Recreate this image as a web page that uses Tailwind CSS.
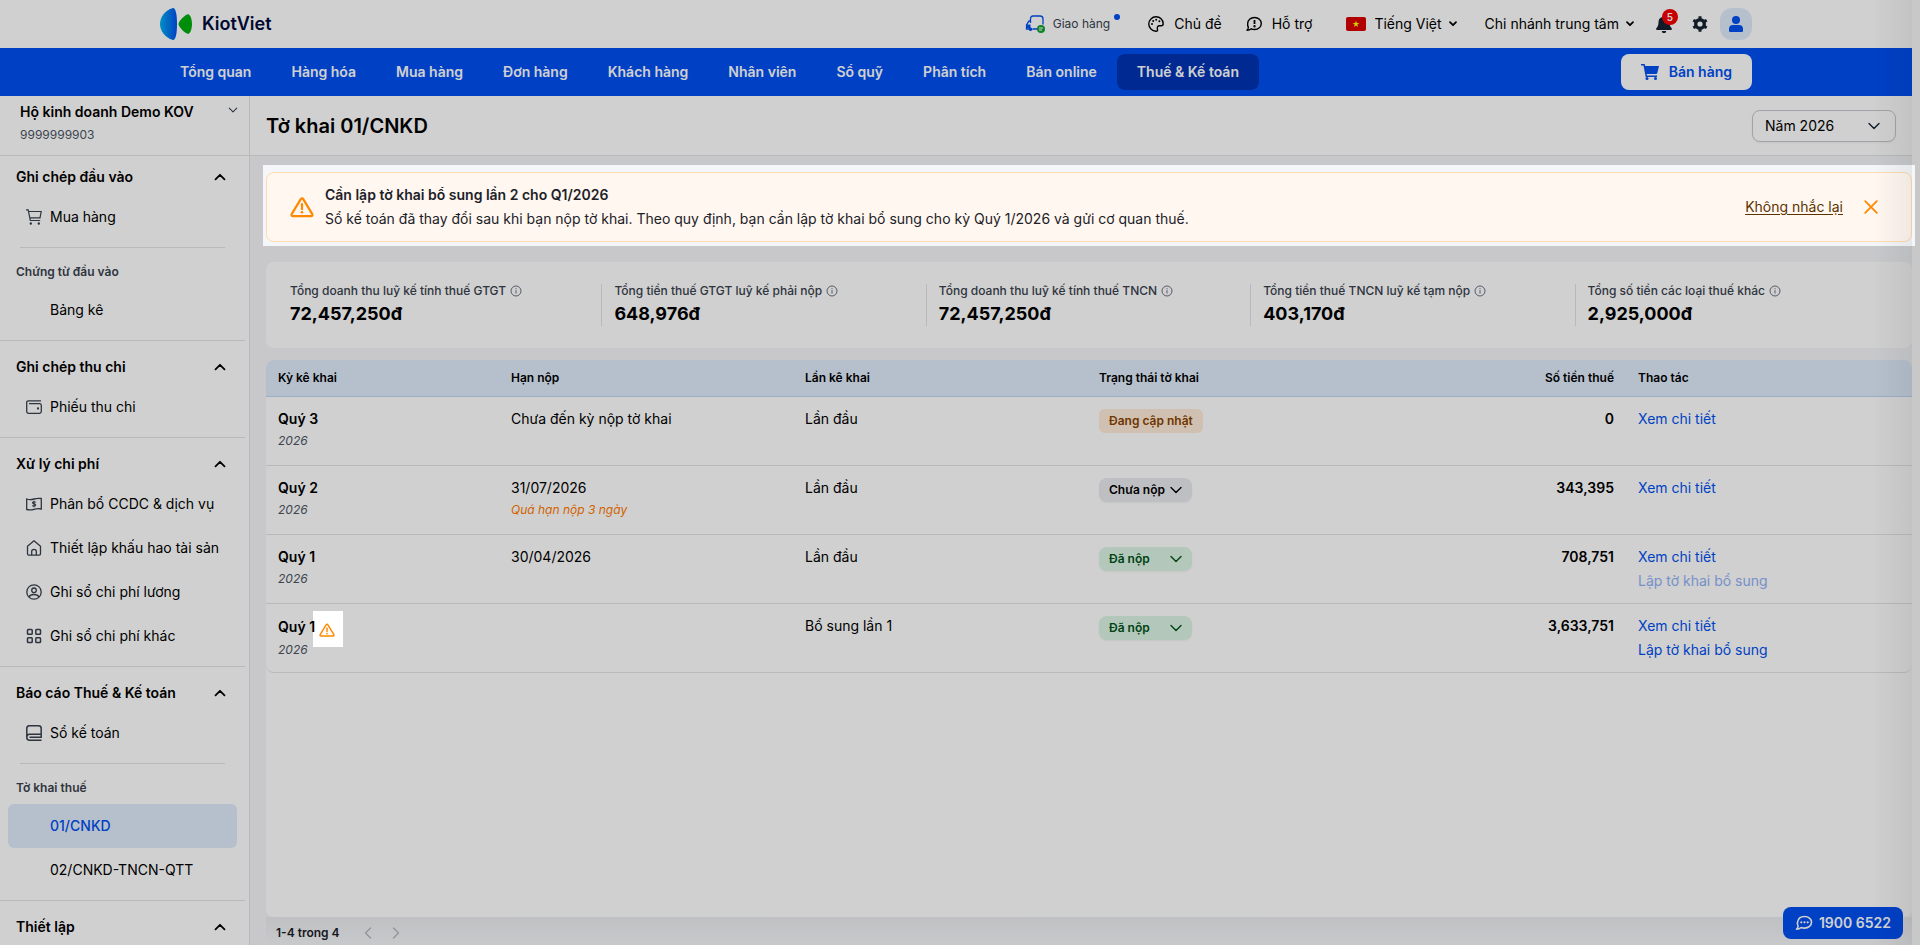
<!DOCTYPE html>
<html lang="vi">
<head>
    <meta charset="UTF-8">
    <meta name="viewport" content="width=device-width, initial-scale=1.0">
    <title>Tờ khai 01/CNKD - KiotViet</title>
    <script src="https://cdn.jsdelivr.net/npm/@tailwindcss/browser@4"></script>
</head>
<body class="relative h-screen overflow-hidden bg-[#f6f6f6] pr-2 font-['Inter',sans-serif] text-sm text-black">

    <!-- Shared icons -->
    <svg class="hidden">
        <symbol id="chevron" viewBox="0 0 16 16"><path d="M3 5.5l5 5 5-5" fill="none" stroke="currentColor" stroke-width="1.4" stroke-linecap="round" stroke-linejoin="round"/></symbol>
        <symbol id="chevron-bold" viewBox="0 0 16 16"><path d="M5 6.200L8 9.200l3-3" fill="none" stroke="currentColor" stroke-width="1.800" stroke-linecap="round" stroke-linejoin="round"/></symbol>
        <symbol id="chevron-up" viewBox="0 0 16 16"><path d="M3.500 10.300L8 5.800l4.500 4.500" fill="none" stroke="currentColor" stroke-width="1.8" stroke-linecap="round" stroke-linejoin="round"/></symbol>
        <symbol id="info" viewBox="0 0 12 12"><g fill="none" stroke="currentColor"><circle cx="6" cy="6" r="5"/><path d="M6 5.2v3.3M6 3.2v1.1"/></g></symbol>
        <symbol id="warning" viewBox="0 0 24 24"><path d="M12 3.300c.5 0 .9.3 1.100.6l9.200 15.200c.5.900-.1 2-1.100 2H2.800c-1 0-1.600-1.100-1.100-2l9.200-15.200c.2-.3.6-.6 1.100-.6z" fill="none" stroke="currentColor" stroke-width="2.200" stroke-linejoin="round"/><path d="M12 9.2v5" stroke="currentColor" stroke-width="2.200" stroke-linecap="round"/><circle cx="12" cy="17.3" r="1.3" fill="currentColor"/></symbol>
    </svg>

    <div class="relative flex h-full flex-col bg-white">
        <header class="px-40">
            <div class="mx-auto flex h-12 max-w-[1592px] items-center justify-between">
                <a href="#" class="flex items-center gap-2.5 text-lg font-semibold text-[#000a3d]">
                    <svg class="h-8 w-8" viewBox="0 0 32 32">
                        <defs><linearGradient id="logo"><stop offset="0" stop-color="#00b0f0"/><stop offset="1" stop-color="#0050f0"/></linearGradient></defs>
                        <path d="M13 0C5 2.500 0 9 0 16s5 13.500 13 16c2.800 0 4-7 4-16S15.800 0 13 0z" fill="url(#logo)"/>
                        <path d="M27.500 6.200c-4 1.800-8.700 7-9 9.800.3 2.800 5 8 9 9.800 2.500.5 4.500-4 4.500-9.800s-2-10.300-4.500-9.800z" fill="#00ad0c"/>
                    </svg>
                    KiotViet
                </a>
                <div class="flex items-center">
                    <a href="#" class="flex items-center text-xs text-[#39424e]">
                        <svg class="mr-2 h-5 w-5" viewBox="0 0 20 20" fill="none">
                            <path d="M5.500 9V5c0-2 1-3 2.500-3h7c2 0 3 1 3 3v5.500M5.500 7H4L1.500 11v4H4M7.500 15H12" stroke="#0050f0" stroke-width="1.300"/>
                            <path d="M1.500 10.500h4V14h-4z" fill="#0050f0"/><circle cx="5.500" cy="15.200" r="1.800" fill="#0050f0"/>
                            <circle cx="16" cy="15" r="4" fill="#12a130"/><path d="M14 14h4M14 16h3" stroke="#fff"/>
                        </svg>
                        Giao hàng
                        <span class="mb-[14px] ml-1 h-1.5 w-1.5 rounded-full bg-[#0050f0]"></span>
                    </a>
                    <a href="#" class="ml-7 flex items-center gap-2.5">
                        <svg class="h-4 w-4" viewBox="0 0 16 16" fill="none" stroke="currentColor" stroke-width="1.400">
                            <path d="M8 .8a7.200 7.200 0 1 0 0 14.400c1.500 0 1.800-1 1.400-2.200-.5-1.700.3-3.200 2-3.200h1.800c1.300 0 2-.8 2-2C15.200 3.800 12 .8 8 .8z"/>
                            <g fill="currentColor" stroke="none"><circle cx="4" cy="8" r="1"/><circle cx="5.200" cy="5" r="1"/><circle cx="8.200" cy="3.700" r="1"/><circle cx="11.400" cy="5.200" r="1"/></g>
                        </svg>
                        Chủ đề
                    </a>
                    <a href="#" class="ml-6 flex items-center gap-2.5">
                        <svg class="h-4 w-4" viewBox="0 0 16 16" fill="none" stroke="currentColor" stroke-width="1.400">
                            <path d="M8.500 1.500c4 0 6.800 2.700 6.800 6s-2.800 6-6.800 6c-1.200 0-2.300-.2-3.200-.7-.9.9-2.400 1.500-4.300 1.500.8-.8 1.300-1.800 1.400-3A5.600 5.600 0 0 1 1.700 7.500c0-3.300 2.800-6 6.800-6z" stroke-linejoin="round"/><path d="M8.500 4v4" stroke-width="1.800"/><circle cx="8.500" cy="10.300" r=".5"/>
                        </svg>
                        Hỗ trợ
                    </a>
                    <button type="button" class="ml-[34px] flex items-center">
                        <svg class="mr-2 h-3.5 w-5" viewBox="0 0 20 14"><rect width="20" height="14" rx="2" fill="#da0000"/><path d="M10 3.500l.8 2.500h2.600l-2.100 1.500.8 2.500L10 8.500 7.900 10l.8-2.500L6.600 6h2.600z" fill="#ff0"/></svg>
                        Tiếng Việt
                        <svg class="ml-[3px] h-4 w-4"><use href="#chevron-bold"/></svg>
                    </button>
                    <button type="button" class="ml-6 flex items-center">
                        Chi nhánh trung tâm
                        <svg class="ml-[3px] h-4 w-4"><use href="#chevron-bold"/></svg>
                    </button>
                    <button type="button" aria-label="Thông báo" class="relative ml-[18px]">
                        <svg class="h-[18px] w-4 text-[#152030]" viewBox="0 0 16 18" fill="currentColor"><path d="M8 0a1 1 0 0 0-1 1v.7A5.500 5.500 0 0 0 2.500 7c0 3.500-.8 4.700-2 6-.8.900-.2 2 .9 2h13.200c1.100 0 1.700-1.100.9-2-1.200-1.300-2-2.500-2-6A5.500 5.500 0 0 0 9 1.700V1a1 1 0 0 0-1-1zM5.800 16a2.200 2.200 0 0 0 4.400 0z"/></svg>
                        <span class="absolute -top-1.5 -right-1.5 flex h-4 w-4 items-center justify-center rounded-full bg-[#f40000] text-[10px] font-semibold text-white">5</span>
                    </button>
                    <button type="button" aria-label="Cài đặt" class="ml-5">
                        <svg class="h-4 w-4 text-[#152030]" viewBox="0 0 16 16" fill="none" stroke="currentColor"><circle cx="8" cy="8" r="4.300" stroke-width="3.400"/><path d="M8 .3v2.500M8 13.200v2.500M1.300 4.200l2.200 1.200M12.500 10.600l2.200 1.200M1.300 11.800l2.200-1.200M12.500 5.400l2.200-1.200" stroke-width="3"/></svg>
                    </button>
                    <button type="button" aria-label="Tài khoản" class="ml-3 flex h-8 w-8 items-center justify-center rounded-xl bg-[#dfecfb] text-[#0050f0]">
                        <svg class="h-4 w-4" viewBox="0 0 16 16" fill="currentColor"><circle cx="8" cy="4" r="4"/><path d="M1 13a4 4 0 0 1 4-4h6a4 4 0 0 1 4 4v1.500c0 1-.5 1.500-1.500 1.500h-11C1.500 16 1 15.500 1 14.500z"/></svg>
                    </button>
                </div>
            </div>
        </header>

        <nav class="bg-[#004ff2] px-40">
            <div class="mx-auto flex h-12 max-w-[1592px] items-center justify-between">
                <div class="flex font-semibold text-white">
                    <a href="#" class="flex h-9 items-center px-5">Tổng quan</a>
                    <a href="#" class="flex h-9 items-center px-5">Hàng hóa</a>
                    <a href="#" class="flex h-9 items-center px-5">Mua hàng</a>
                    <a href="#" class="flex h-9 items-center px-5">Đơn hàng</a>
                    <a href="#" class="flex h-9 items-center px-5">Khách hàng</a>
                    <a href="#" class="flex h-9 items-center px-5">Nhân viên</a>
                    <a href="#" class="flex h-9 items-center px-5">Sổ quỹ</a>
                    <a href="#" class="flex h-9 items-center px-5">Phân tích</a>
                    <a href="#" class="flex h-9 items-center px-5">Bán online</a>
                    <a href="#" class="flex h-9 items-center rounded-lg bg-[#0033b3] px-5">Thuế &amp; Kế toán</a>
                </div>
                <button type="button" class="flex h-9 items-center gap-2.5 rounded-lg bg-white px-5 font-semibold text-[#0050f0]">
                    <svg class="h-4 w-[18px]" viewBox="0 0 18 16" fill="currentColor"><path d="M0 0h3.200c.4 0 .7.300.8.700L4.200 2H18l-1.800 7.200c-.1.500-.5.800-1 .8H5.600l.3 1.500H16V13H4.700L2.500 1.500H0z"/><circle cx="6" cy="14.500" r="1.500"/><circle cx="14.500" cy="14.500" r="1.500"/></svg>
                    Bán hàng
                </button>
            </div>
        </nav>

        <div class="flex min-h-0 flex-1">
            <aside class="flex w-[250px] shrink-0 flex-col border-r border-[#e2e3e6]">
                <button type="button" class="flex h-[60px] shrink-0 items-start justify-between border-b border-[#e2e3e6] pt-1.5 pr-2 pl-5 text-left">
                    <span>
                        <span class="block font-semibold leading-5">Hộ kinh doanh Demo KOV</span>
                        <span class="mt-[3px] block text-xs leading-5 text-[#4b5563]">9999999903</span>
                    </span>
                    <svg class="mt-0.5 h-3 w-4 text-[#39424e]"><use href="#chevron"/></svg>
                </button>
                <div class="min-h-0 flex-1 overflow-hidden pr-1">
                    <section class="border-b border-[#e2e3e6] pt-[3px] pb-2">
                        <button type="button" class="flex h-9 w-full items-center justify-between pr-[17px] pl-4 font-semibold">Ghi chép đầu vào <svg class="h-4 w-4"><use href="#chevron-up"/></svg></button>
                        <a href="#" class="flex h-11 items-center gap-2 pl-[26px]">
                            <svg class="h-4 w-4 text-[#39424e]" viewBox="0 0 16 16" fill="none" stroke="currentColor" stroke-width="1.200"><path d="M0 .8h2.200L4.300 11.500h9.900M2.600 2.500h12.600L14 8.800H3.900"/><circle cx="4.800" cy="14.500" r=".6"/><circle cx="12.800" cy="14.500" r=".6"/></svg>
                            Mua hàng
                        </a>
                        <hr class="my-2 mr-5 ml-5 border-[#e2e3e6]">
                        <h3 class="flex h-8 items-center pl-4 text-xs font-semibold text-[#39424e]">Chứng từ đầu vào</h3>
                        <a href="#" class="flex h-11 items-center pl-[50px]">Bảng kê</a>
                    </section>
                    <section class="border-b border-[#e2e3e6] py-2">
                        <button type="button" class="flex h-9 w-full items-center justify-between pr-[17px] pl-4 font-semibold">Ghi chép thu chi <svg class="h-4 w-4"><use href="#chevron-up"/></svg></button>
                        <a href="#" class="flex h-11 items-center gap-2 pl-[26px]">
                            <svg class="h-4 w-4 text-[#39424e]" viewBox="0 0 16 16" fill="none" stroke="currentColor" stroke-width="1.300"><path d="M15 1.800H2.500C1.300 1.800.7 2.500.7 3.500v9c0 1.100.6 1.800 1.800 1.800h11c1.200 0 1.800-.7 1.800-1.800v-6c0-1.100-.6-1.800-1.800-1.800H3"/><circle cx="12" cy="9.500" r=".5"/></svg>
                            Phiếu thu chi
                        </a>
                    </section>
                    <section class="border-b border-[#e2e3e6] py-2">
                        <button type="button" class="flex h-9 w-full items-center justify-between pr-[17px] pl-4 font-semibold">Xử lý chi phí <svg class="h-4 w-4"><use href="#chevron-up"/></svg></button>
                        <a href="#" class="flex h-11 items-center gap-2 pl-[26px]">
                            <svg class="h-4 w-4 text-[#39424e]" viewBox="0 0 16 16" fill="none" stroke="currentColor" stroke-width="1.300"><path d="M.7 3c2.500.8 4.800.7 7.300 0s4.800-.9 7.300-.5V13c-2.500-.6-4.800-.4-7.300.3s-4.800.8-7.300.2z"/><path d="M9.800 6.300C9.300 5.800 8.700 5.700 8 5.700c-.9 0-1.500.4-1.500 1 0 1.500 3.200.8 3.200 2.400 0 .7-.7 1.100-1.700 1.100-.8 0-1.400-.2-1.800-.7M8 4.800v6.400" stroke-width="1.100"/></svg>
                            Phân bổ CCDC &amp; dịch vụ
                        </a>
                        <a href="#" class="flex h-11 items-center gap-2 pl-[26px]">
                            <svg class="h-4 w-4 text-[#39424e]" viewBox="0 0 16 16" fill="none" stroke="currentColor" stroke-width="1.300" stroke-linejoin="round"><path d="M8 .8L1.500 6.200v7.600c0 .8.500 1.400 1.300 1.400h10.400c.8 0 1.300-.6 1.300-1.400V6.200z"/><path d="M5.700 15v-3.500C5.700 10 6.700 9.300 8 9.300s2.300.7 2.300 2.200V15"/></svg>
                            Thiết lập khấu hao tài sản
                        </a>
                        <a href="#" class="flex h-11 items-center gap-2 pl-[26px]">
                            <svg class="h-4 w-4 text-[#39424e]" viewBox="0 0 16 16" fill="none" stroke="currentColor" stroke-width="1.300"><circle cx="8" cy="8" r="7.200"/><circle cx="8" cy="6.300" r="2.300"/><path d="M3 13c.8-1.700 2.700-2.500 5-2.500s4.200.8 5 2.500"/></svg>
                            Ghi sổ chi phí lương
                        </a>
                        <a href="#" class="flex h-11 items-center gap-2 pl-[26px]">
                            <svg class="h-4 w-4 text-[#39424e]" viewBox="0 0 16 16" fill="none" stroke="currentColor" stroke-width="1.500"><rect x="1.500" y="1.500" width="4.700" height="4.700" rx=".8"/><rect x="9.800" y="1.500" width="4.700" height="4.700" rx=".8"/><rect x="1.500" y="9.800" width="4.700" height="4.700" rx=".8"/><rect x="9.800" y="9.800" width="4.700" height="4.700" rx=".8"/></svg>
                            Ghi sổ chi phí khác
                        </a>
                    </section>
                    <section class="border-b border-[#e2e3e6] py-2">
                        <button type="button" class="flex h-9 w-full items-center justify-between pr-[17px] pl-4 font-semibold">Báo cáo Thuế &amp; Kế toán <svg class="h-4 w-4"><use href="#chevron-up"/></svg></button>
                        <a href="#" class="flex h-11 items-center gap-2 pl-[26px]">
                            <svg class="h-4 w-4 text-[#39424e]" viewBox="0 0 16 16" fill="none" stroke="currentColor" stroke-width="1.500"><path d="M.8 12.500V3.500C.8 1.800 1.800.8 3.500.8h9c1.700 0 2.700 1 2.700 2.700v5.800H3.500C1.800 9.300.8 10.500.8 12.200s1 3 2.700 3h12M3.500 12.300h11.700V9"/></svg>
                            Sổ kế toán
                        </a>
                        <hr class="my-2 mr-5 ml-5 border-[#e2e3e6]">
                        <h3 class="flex h-8 items-center pl-4 text-xs font-semibold text-[#39424e]">Tờ khai thuế</h3>
                        <a href="#" class="mx-2 flex h-11 items-center rounded-md bg-[#dfecfb] pl-[42px] font-medium text-[#0050f0]">01/CNKD</a>
                        <a href="#" class="flex h-11 items-center pl-[50px]">02/CNKD-TNCN-QTT</a>
                    </section>
                    <section class="py-2">
                        <button type="button" class="flex h-9 w-full items-center justify-between pr-[17px] pl-4 font-semibold">Thiết lập <svg class="h-4 w-4"><use href="#chevron-up"/></svg></button>
                    </section>
                </div>
            </aside>

            <main class="flex min-w-0 flex-1 flex-col bg-[#f5f6f9]">
                <div class="flex h-[60px] shrink-0 items-center justify-between border-b border-[#e2e3e6] bg-white px-4">
                    <h1 class="text-xl font-semibold">Tờ khai 01/CNKD</h1>
                    <div class="relative">
                        <select aria-label="Năm" class="h-8 w-36 appearance-none rounded-lg border border-[#c6c8ce] bg-white px-3 shadow-xs">
                            <option>Năm 2026</option>
                            <option>Năm 2025</option>
                        </select>
                        <svg class="pointer-events-none absolute top-2 right-3.5 h-4 w-4 text-[#152030]"><use href="#chevron"/></svg>
                    </div>
                </div>

                <div class="flex min-h-0 flex-1 flex-col pt-4 pl-4">
                    <div class="flex h-[70px] shrink-0 items-center rounded-lg border border-[#ffdcb0] bg-[#fff7f0] pr-8 pl-[23px]">
                        <svg class="mr-[11px] h-6 w-6 shrink-0 text-[#ff8800]"><use href="#warning"/></svg>
                        <div class="flex-1 leading-6 text-[#1c2128]">
                            <p class="font-semibold">Cần lập tờ khai bổ sung lần 2 cho Q1/2026</p>
                            <p>Sổ kế toán đã thay đổi sau khi bạn nộp tờ khai. Theo quy định, bạn cần lập tờ khai bổ sung cho kỳ Quý 1/2026 và gửi cơ quan thuế.</p>
                        </div>
                        <a href="#" class="mr-5 text-[#5c3300] underline underline-offset-2">Không nhắc lại</a>
                        <button type="button" aria-label="Đóng">
                            <svg class="h-4 w-4 text-[#ff8800]" viewBox="0 0 16 16"><path d="M2.200 2.200l11.600 11.600M13.800 2.200L2.200 13.800" stroke="currentColor" stroke-width="1.800" stroke-linecap="round"/></svg>
                        </button>
                    </div>

                    <dl class="mt-5 grid h-[86px] shrink-0 grid-cols-5 rounded-lg bg-white px-3 py-[22px]">
                        <div class="border-r border-[#e2e3e6] pl-3">
                            <dt class="flex items-center gap-1 text-xs font-medium leading-[14px] text-[#39424e]">Tổng doanh thu luỹ kế tính thuế GTGT <svg class="h-3 w-3 text-[#6b7280]"><use href="#info"/></svg></dt>
                            <dd class="mt-1 text-lg font-bold leading-6">72,457,250đ</dd>
                        </div>
                        <div class="border-r border-[#e2e3e6] pl-3">
                            <dt class="flex items-center gap-1 text-xs font-medium leading-[14px] text-[#39424e]">Tổng tiền thuế GTGT luỹ kế phải nộp <svg class="h-3 w-3 text-[#6b7280]"><use href="#info"/></svg></dt>
                            <dd class="mt-1 text-lg font-bold leading-6">648,976đ</dd>
                        </div>
                        <div class="border-r border-[#e2e3e6] pl-3">
                            <dt class="flex items-center gap-1 text-xs font-medium leading-[14px] text-[#39424e]">Tổng doanh thu luỹ kế tính thuế TNCN <svg class="h-3 w-3 text-[#6b7280]"><use href="#info"/></svg></dt>
                            <dd class="mt-1 text-lg font-bold leading-6">72,457,250đ</dd>
                        </div>
                        <div class="border-r border-[#e2e3e6] pl-3">
                            <dt class="flex items-center gap-1 text-xs font-medium leading-[14px] text-[#39424e]">Tổng tiền thuế TNCN luỹ kế tạm nộp <svg class="h-3 w-3 text-[#6b7280]"><use href="#info"/></svg></dt>
                            <dd class="mt-1 text-lg font-bold leading-6">403,170đ</dd>
                        </div>
                        <div class="pl-3">
                            <dt class="flex items-center gap-1 text-xs font-medium leading-[14px] text-[#39424e]">Tổng số tiền các loại thuế khác <svg class="h-3 w-3 text-[#6b7280]"><use href="#info"/></svg></dt>
                            <dd class="mt-1 text-lg font-bold leading-6">2,925,000đ</dd>
                        </div>
                    </dl>

                    <div class="mt-3 min-h-0 flex-1 rounded-lg bg-white">
                        <div class="overflow-hidden rounded-lg border-b border-[#e2e3e6]">
                            <table class="w-full table-fixed border-separate border-spacing-0 text-left">
                                <colgroup>
                                    <col class="w-[233px]">
                                    <col class="w-[294px]">
                                    <col class="w-[294px]">
                                    <col class="w-[294px]">
                                    <col>
                                    <col class="w-[286px]">
                                </colgroup>
                                <thead>
                                    <tr class="h-[37px] bg-[#dfecfb] text-xs">
                                        <th class="border-b border-[#c0d4f5] px-3 font-semibold">Kỳ kê khai</th>
                                        <th class="border-b border-[#c0d4f5] px-3 font-semibold">Hạn nộp</th>
                                        <th class="border-b border-[#c0d4f5] px-3 font-semibold">Lần kê khai</th>
                                        <th class="border-b border-[#c0d4f5] px-3 font-semibold">Trạng thái tờ khai</th>
                                        <th class="border-b border-[#c0d4f5] px-3 text-right font-semibold">Số tiền thuế</th>
                                        <th class="border-b border-[#c0d4f5] px-3 font-semibold">Thao tác</th>
                                    </tr>
                                </thead>
                                <tbody class="align-top leading-6">
                                    <tr class="h-[69px]">
                                        <td class="border-b border-[#e2e3e6] px-3 pt-2.5"><p class="font-semibold">Quý 3</p><p class="text-xs leading-5 text-[#4b5563] italic">2026</p></td>
                                        <td class="border-b border-[#e2e3e6] px-3 pt-2.5">Chưa đến kỳ nộp tờ khai</td>
                                        <td class="border-b border-[#e2e3e6] px-3 pt-2.5">Lần đầu</td>
                                        <td class="border-b border-[#e2e3e6] px-3 pt-3"><span class="inline-flex h-6 items-center rounded-md bg-[#ffecd9] px-2.5 align-top text-xs font-semibold text-[#8a4300]">Đang cập nhật</span></td>
                                        <td class="border-b border-[#e2e3e6] px-3 pt-2.5 text-right font-semibold">0</td>
                                        <td class="border-b border-[#e2e3e6] px-3 pt-2.5"><a href="#" class="block text-[#0050f0]">Xem chi tiết</a></td>
                                    </tr>
                                    <tr class="h-[69px]">
                                        <td class="border-b border-[#e2e3e6] px-3 pt-2.5"><p class="font-semibold">Quý 2</p><p class="text-xs leading-5 text-[#4b5563] italic">2026</p></td>
                                        <td class="border-b border-[#e2e3e6] px-3 pt-2.5"><p>31/07/2026</p><p class="text-xs leading-5 text-[#ff7a00] italic">Quá hạn nộp 3 ngày</p></td>
                                        <td class="border-b border-[#e2e3e6] px-3 pt-2.5">Lần đầu</td>
                                        <td class="border-b border-[#e2e3e6] px-3 pt-3">
                                            <div class="relative w-[93px]">
                                                <select aria-label="Trạng thái Quý 2" class="block h-6 w-full appearance-none rounded-lg bg-[#e9ebef] px-2.5 text-xs font-semibold text-black shadow-xs"><option>Chưa nộp</option><option>Đã nộp</option></select>
                                                <svg class="pointer-events-none absolute top-1 right-2 h-4 w-4"><use href="#chevron"/></svg>
                                            </div>
                                        </td>
                                        <td class="border-b border-[#e2e3e6] px-3 pt-2.5 text-right font-semibold">343,395</td>
                                        <td class="border-b border-[#e2e3e6] px-3 pt-2.5"><a href="#" class="block text-[#0050f0]">Xem chi tiết</a></td>
                                    </tr>
                                    <tr class="h-[69px]">
                                        <td class="border-b border-[#e2e3e6] px-3 pt-2.5"><p class="font-semibold">Quý 1</p><p class="text-xs leading-5 text-[#4b5563] italic">2026</p></td>
                                        <td class="border-b border-[#e2e3e6] px-3 pt-2.5">30/04/2026</td>
                                        <td class="border-b border-[#e2e3e6] px-3 pt-2.5">Lần đầu</td>
                                        <td class="border-b border-[#e2e3e6] px-3 pt-3">
                                            <div class="relative w-[93px] text-[#005218]">
                                                <select aria-label="Trạng thái Quý 1" class="block h-6 w-full appearance-none rounded-lg bg-[#dcf5e4] px-2.5 text-xs font-semibold shadow-xs"><option>Đã nộp</option><option>Chưa nộp</option></select>
                                                <svg class="pointer-events-none absolute top-1 right-2 h-4 w-4"><use href="#chevron"/></svg>
                                            </div>
                                        </td>
                                        <td class="border-b border-[#e2e3e6] px-3 pt-2.5 text-right font-semibold">708,751</td>
                                        <td class="border-b border-[#e2e3e6] px-3 pt-2.5"><a href="#" class="block text-[#0050f0]">Xem chi tiết</a><a class="block text-[#0050f0]/45" aria-disabled="true">Lập tờ khai bổ sung</a></td>
                                    </tr>
                                    <tr class="h-[68px]">
                                        <td class="px-3 pt-2.5"><p class="flex h-[26px] items-center gap-1 font-semibold">Quý 1 <svg class="mt-1.5 h-4 w-4 text-[#ff8800]"><use href="#warning"/></svg></p><p class="text-xs leading-5 text-[#4b5563] italic">2026</p></td>
                                        <td class="px-3 pt-2.5"></td>
                                        <td class="px-3 pt-2.5">Bổ sung lần 1</td>
                                        <td class="px-3 pt-3">
                                            <div class="relative w-[93px] text-[#005218]">
                                                <select aria-label="Trạng thái Quý 1 bổ sung" class="block h-6 w-full appearance-none rounded-lg bg-[#dcf5e4] px-2.5 text-xs font-semibold shadow-xs"><option>Đã nộp</option><option>Chưa nộp</option></select>
                                                <svg class="pointer-events-none absolute top-1 right-2 h-4 w-4"><use href="#chevron"/></svg>
                                            </div>
                                        </td>
                                        <td class="px-3 pt-2.5 text-right font-semibold">3,633,751</td>
                                        <td class="px-3 pt-2.5"><a href="#" class="block text-[#0050f0]">Xem chi tiết</a><a href="#" class="block text-[#0050f0]">Lập tờ khai bổ sung</a></td>
                                    </tr>
                                </tbody>
                            </table>
                        </div>
                    </div>

                    <div class="flex h-7 shrink-0 items-center bg-linear-to-b from-black/4 to-transparent pt-1 pl-2.5 text-xs font-semibold text-[#1c2128]">
                        1-4 trong 4
                        <button type="button" aria-label="Trang trước" class="ml-5 text-[#b4b8c0]"><svg class="h-4 w-4 rotate-90"><use href="#chevron"/></svg></button>
                        <button type="button" aria-label="Trang sau" class="ml-3 text-[#b4b8c0]"><svg class="h-4 w-4 -rotate-90"><use href="#chevron"/></svg></button>
                    </div>
                </div>
            </main>
        </div>

        <button type="button" class="absolute right-[9px] bottom-1.5 flex h-8 items-center gap-1.5 rounded-lg bg-[#004ff2] px-3 font-semibold text-white">
            <svg class="h-4 w-[18px]" viewBox="0 0 18 16" fill="none" stroke="currentColor" stroke-width="1.600"><path d="M9.500 1.500c4 0 7 2.500 7 5.800s-3 5.800-7 5.800c-1.200 0-2.300-.2-3.300-.6-1 .9-2.700 1.700-4.700 1.700.9-.9 1.500-1.900 1.600-3a5.400 5.400 0 0 1-.6-3.900c.5-3.300 3-5.800 7-5.800z" stroke-linejoin="round"/><g fill="currentColor" stroke="none"><circle cx="6.300" cy="7.300" r="1.100"/><circle cx="9.500" cy="7.300" r="1.100"/><circle cx="12.700" cy="7.300" r="1.100"/></g></svg>
            1900 6522
        </button>

        <div class="pointer-events-none absolute inset-y-0 right-0 w-10 bg-linear-to-l from-black/6 to-transparent"></div>
    </div>

    <!-- Tour overlay with two highlighted areas -->
    <svg class="pointer-events-none absolute inset-0 h-full w-full">
        <mask id="tour">
            <rect width="100%" height="100%" fill="#fff"/>
            <rect class="w-[calc(100%-268px)]" x="263" y="165" height="81" fill="#000"/>
            <rect x="313" y="611" width="30" height="36" fill="#000"/>
        </mask>
        <rect width="100%" height="100%" fill="#000" fill-opacity="0.184" mask="url(#tour)"/>
    </svg>
</body>
</html>
